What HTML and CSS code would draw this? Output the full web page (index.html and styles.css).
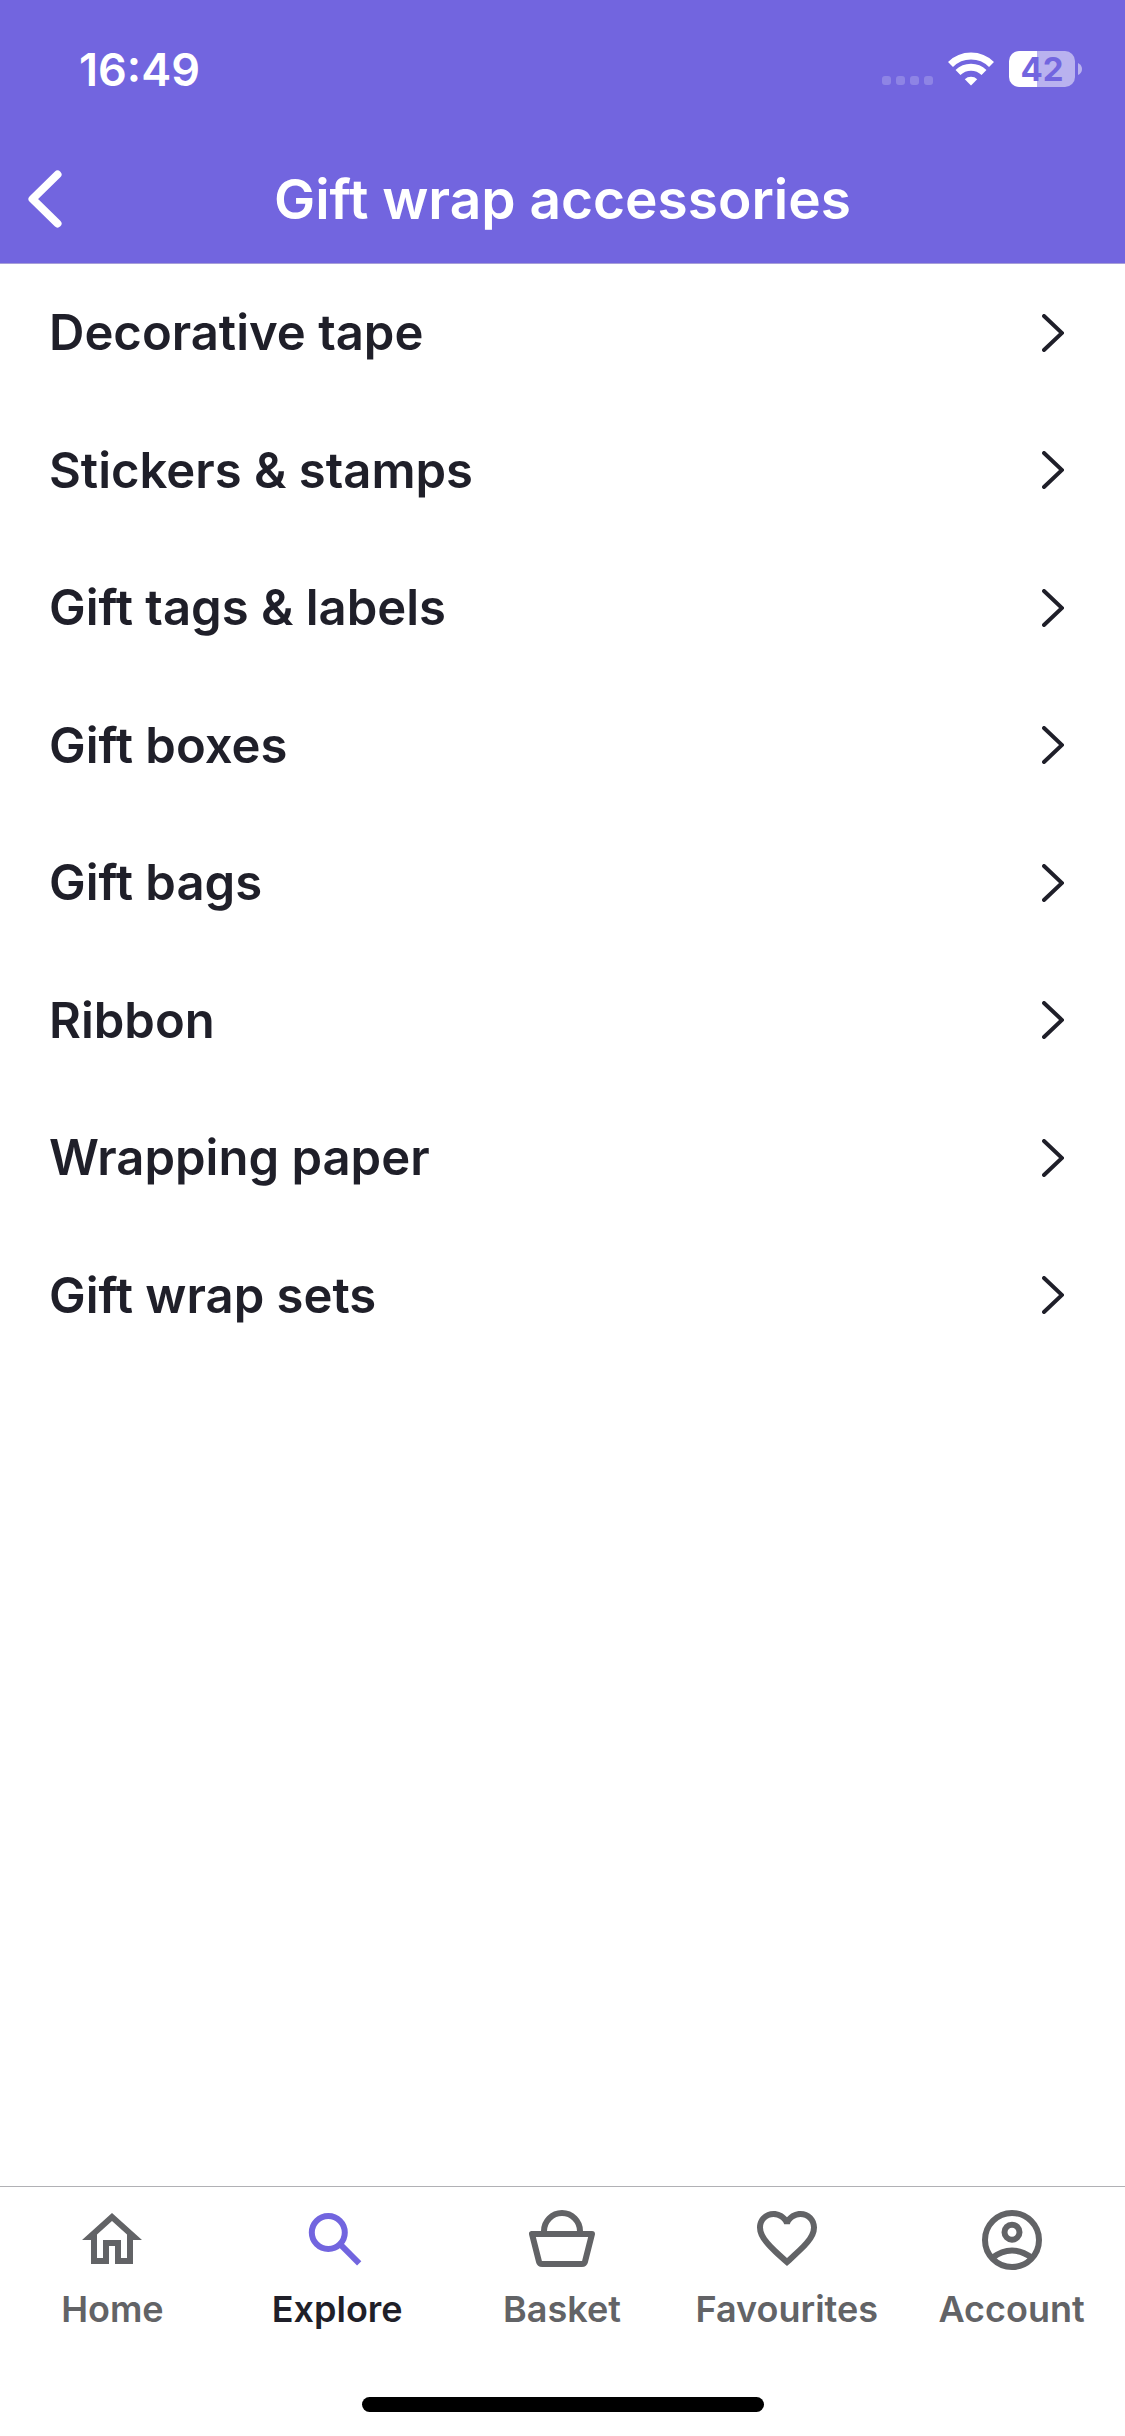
FILE: index.html
```
<!DOCTYPE html>
<html lang="en">
<head>
  <meta charset="UTF-8">
  <title>Gift wrap accessories</title>
  <meta name="viewport" content="width=device-width, initial-scale=1.0">
  <link rel="stylesheet" href="styles.css">
</head>
<body>

  <header class="header">
    <div class="status">
      <span class="time">16:49</span>
      <div class="status-icons">
        <div class="signal"><i></i><i></i><i></i><i></i></div>
        <svg class="wifi" viewBox="0 0 46 34" fill="none" stroke="#fff">
          <path d="M2.5 12.5a29 29 0 0 1 41 0" stroke-width="7"/>
          <path d="M10 20.5a18.500 18.500 0 0 1 26 0" stroke-width="7"/>
          <path d="M23 33.500L16.800 27.300a9 9 0 0 1 12.400 0z" fill="#fff" stroke="none"/>
        </svg>
        <div class="battery">
          <span class="level">42</span>
          <svg class="nub" viewBox="0 0 4 12"><path d="M0 0q4 2 4 6t-4 6z" fill="#b9b2ef"/></svg>
        </div>
      </div>
    </div>
    <div class="title-bar">
      <button class="back" aria-label="Back">
        <svg viewBox="0 0 34 58"><path d="M29.500 4.500L4.500 29l25 24.500"/></svg>
      </button>
      <h1>Gift wrap accessories</h1>
    </div>
  </header>

  <main class="list">
    <a href="#">Decorative tape <svg viewBox="0 0 22 38"><path d="M2 2l18 17L2 36"/></svg></a>
    <a href="#">Stickers &amp; stamps <svg viewBox="0 0 22 38"><path d="M2 2l18 17L2 36"/></svg></a>
    <a href="#">Gift tags &amp; labels <svg viewBox="0 0 22 38"><path d="M2 2l18 17L2 36"/></svg></a>
    <a href="#">Gift boxes <svg viewBox="0 0 22 38"><path d="M2 2l18 17L2 36"/></svg></a>
    <a href="#">Gift bags <svg viewBox="0 0 22 38"><path d="M2 2l18 17L2 36"/></svg></a>
    <a href="#">Ribbon <svg viewBox="0 0 22 38"><path d="M2 2l18 17L2 36"/></svg></a>
    <a href="#">Wrapping paper <svg viewBox="0 0 22 38"><path d="M2 2l18 17L2 36"/></svg></a>
    <a href="#">Gift wrap sets <svg viewBox="0 0 22 38"><path d="M2 2l18 17L2 36"/></svg></a>
  </main>

  <footer class="footer">
    <nav class="tabs">
      <a href="#">
        <svg viewBox="0 0 24 24"><path fill="currentColor" d="M12 5.690l5 4.500V18h-2v-6H9v6H7v-7.810l5-4.500M12 3L2 12h3v8h6v-6h2v6h6v-8h3z"/></svg>
        Home
      </a>
      <a href="#" class="active">
        <svg viewBox="0 0 24 24" fill="none" stroke="#7265df" stroke-width="2">
          <circle cx="9.100" cy="9.500" r="5.500"/>
          <path d="M13.500 13.900l5.900 5.900"/>
        </svg>
        Explore
      </a>
      <a href="#">
        <svg viewBox="0 0 24 24" fill="none" stroke="currentColor" stroke-width="2" stroke-linejoin="round">
          <path d="M6 10V9a6 6 0 0 1 12 0v1"/>
          <path d="M2 10h20l-2.300 9.100q-.2.900-1.100.9H5.400q-.9 0-1.100-.9z"/>
        </svg>
        Basket
      </a>
      <a href="#">
        <svg viewBox="0 0 24 24"><path transform="translate(0 -.65)" fill="currentColor" d="M16.500 3c-1.740 0-3.410.81-4.500 2.090C10.910 3.810 9.240 3 7.500 3 4.420 3 2 5.420 2 8.500c0 3.780 3.400 6.860 8.550 11.540L12 21.350l1.450-1.320C18.600 15.360 22 12.280 22 8.500 22 5.420 19.580 3 16.500 3zm-4.400 15.550l-.1.100-.1-.1C7.140 14.240 4 11.390 4 8.500 4 6.500 5.500 5 7.500 5c1.540 0 3.040.99 3.570 2.360h1.870C13.460 5.990 14.960 5 16.500 5c2 0 3.500 1.500 3.500 3.500 0 2.890-3.140 5.740-7.900 10.050z"/></svg>
        Favourites
      </a>
      <a href="#">
        <svg viewBox="0 0 24 24" fill="none" stroke="currentColor" stroke-width="2">
          <circle cx="12" cy="12" r="9"/>
          <circle cx="12" cy="9.400" r="2.500"/>
          <path d="M5.300 18q6.700-5 13.400 0"/>
        </svg>
        Account
      </a>
    </nav>
    <div class="home-bar"></div>
  </footer>

</body>
</html>
```

FILE: styles.css
```
:root{
  --accent:#7265df;
  --txt:#1f1f29;
  --muted:#626366
}
*{box-sizing:border-box;margin:0;padding:0}
body{
  font-family:Inter,sans-serif;font-weight:600;
  min-height:100vh;display:flex;flex-direction:column;
  background:#fff;color:var(--txt)
}
a{color:inherit;text-decoration:none}
svg{display:block}

/* Header */
.header{background:var(--accent);color:#fff;border-bottom:1px solid #a79fd8}
.status{
  height:138px;padding:0 43px 0 79px;
  display:flex;align-items:center;justify-content:space-between
}
.time{font-size:45px}
.status-icons{display:flex;align-items:center}
.signal{display:flex;gap:5px;align-self:flex-end;margin:0 15px 2px 0}
.signal i{width:9px;height:9px;border-radius:3px;background:#8e84e5}
.wifi{width:46px;height:34px}
.battery{
  position:relative;width:66px;height:36px;margin:0 7px 0 15px;border-radius:10px;
  background:linear-gradient(90deg,#fff 42%,#b9b2ef 42%);
  display:flex;align-items:center;justify-content:center
}
.level{font-size:33px;font-weight:700;color:var(--accent)}
.nub{position:absolute;left:69px;top:12px;width:4px;height:12px}
.title-bar{
  height:125px;padding:0 28px 4px;
  display:grid;grid-template-columns:34px 1fr 34px;align-items:center
}
.back{background:none;border:none;cursor:pointer}
.back svg{
  width:34px;height:58px;fill:none;stroke:#fff;stroke-width:8px;
  stroke-linecap:round;stroke-linejoin:round
}
h1{font-size:55px;font-weight:600;text-align:center}

/* Category list */
.list{min-height:1100px;display:grid;grid-auto-rows:1fr}
.list a{
  padding:0 61px 0 49px;font-size:49px;
  display:flex;align-items:center;justify-content:space-between
}
.list svg{
  width:22px;height:38px;fill:none;stroke:var(--txt);stroke-width:4px;
  stroke-linecap:round
}

/* Bottom tabs */
.footer{margin-top:auto;border-top:1px solid #b1b1b5}
.tabs{display:grid;grid-template-columns:repeat(5,1fr);padding-right:1px}
.tabs a{
  padding-top:17px;font-size:36px;line-height:44px;color:var(--muted);
  display:flex;flex-direction:column;align-items:center;gap:11px
}
.tabs .active{color:var(--txt)}
.tabs svg{width:72px;height:72px}
.home-bar{
  width:402px;height:15px;margin:66px auto 24px;
  border-radius:8px;background:#000
}
```
